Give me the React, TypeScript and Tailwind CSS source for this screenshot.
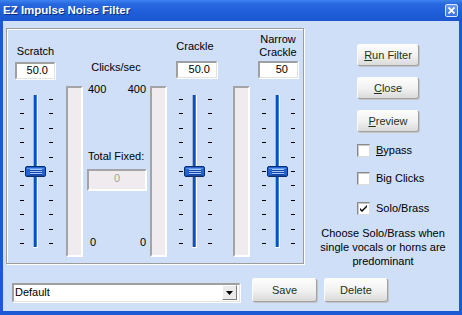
import React from "react";

const ticks = Array.from({ length: 11 }, (_, i) => Math.round(6 + i * 14.4));

function Slider() {
  return (
    <svg width="36" height="158" viewBox="0 0 36 158" className="block mx-auto">
      {ticks.map((y) => (
        <g key={y}>
          <rect x="2" y={y} width="4" height="1" fill="#000" />
          <rect x="31" y={y} width="4" height="1" fill="#000" />
        </g>
      ))}
      <rect x="15" y="2" width="1" height="152" fill="#9fb3d3" />
      <rect x="16" y="2" width="3" height="152" fill="#0b50bd" />
      <rect x="18" y="2" width="1" height="152" fill="#3c82e6" />
      <rect x="19" y="2" width="1" height="153" fill="#ffffff" />
      <rect x="15" y="154" width="5" height="1" fill="#ffffff" />
      <rect x="7.5" y="73.5" width="20" height="10" rx="1.5" fill="#2262d2" stroke="#0a2c73" />
      <rect x="9" y="75" width="17" height="1" fill="#5a96f0" />
      <rect x="9" y="82" width="17" height="1" fill="#174aa8" />
      {[76, 78, 80].map((y) => (
        <g key={y}>
          <rect x="12" y={y} width="12" height="1" fill="#a9c8ff" />
          <rect x="12" y={y + 1} width="12" height="1" fill="#1246a6" />
        </g>
      ))}
    </svg>
  );
}

function TextBox({ value, className }: { value: string; className: string }) {
  return (
    <div
      className={`h-[17px] bg-white border-t-2 border-l-2 border-r border-b border-t-[#a0a0a0] border-l-[#a0a0a0] border-r-[#e2e2e2] border-b-[#e2e2e2] shadow-[1px_1px_0_#ffffff] text-right pr-[6px] leading-[13px] ${className}`}
    >
      {value}
    </div>
  );
}

function Meter({ className }: { className?: string }) {
  return (
    <div
      className={`mt-[57px] w-[17px] h-[171px] bg-[#efebef] border-2 border-t-[#a4a4a8] border-l-[#a4a4a8] border-r-white border-b-white ${className ?? ""}`}
    />
  );
}

function Btn({ children, className }: { children: React.ReactNode; className: string }) {
  return (
    <button
      type="button"
      className={`flex items-center justify-center rounded-[3px] border border-t-[#fdfdfd] border-l-[#fdfdfd] border-r-[#a2a2a2] border-b-[#a2a2a2] bg-[linear-gradient(180deg,#fdfdfd_0%,#f0f0f0_55%,#dadada_100%)] shadow-[1px_1px_0_#c4c4c4] text-[#1e3312] leading-[13px] ${className}`}
    >
      {children}
    </button>
  );
}

function Check({ label, checked, className }: { label: React.ReactNode; checked?: boolean; className: string }) {
  return (
    <div className={`flex items-center ${className}`}>
      <div className="w-[13px] h-[13px] bg-white border border-t-[#8a8a8a] border-l-[#8a8a8a] border-r-[#dcdcdc] border-b-[#dcdcdc] shadow-[inset_1px_1px_0_#c8c8c8] flex items-center justify-center">
        {checked && (
          <svg width="7" height="7" viewBox="0 0 7 7">
            <path d="M0 3 L0 5 L2 7 L7 2 L7 0 L2 5 Z" fill="#000" />
          </svg>
        )}
      </div>
      <span className="ml-[6px] leading-[13px]">{label}</span>
    </div>
  );
}

export default function App() {
  return (
    <div className="w-[462px] h-[315px] flex flex-col overflow-hidden font-['Liberation_Sans',Arial,sans-serif] text-[11px] leading-[13px] text-black">
      <div className="h-[21px] shrink-0 flex items-center justify-between pl-[3px] pr-[4px] bg-[linear-gradient(180deg,#3d83f2_0%,#2767de_20%,#1f5ed8_60%,#1a56cf_100%)]">
        <span className="text-white font-bold text-[11.5px] leading-none [text-shadow:1px_1px_0_#0a2a80]">
          EZ Impulse Noise Filter
        </span>
        <div className="w-[13px] h-[13px] rounded-[2px] border border-[#dbe6fb] bg-[linear-gradient(180deg,#6d9cf3_0%,#3a70e0_100%)] flex items-center justify-center">
          <svg width="7" height="7" viewBox="0 0 7 7">
            <path d="M0.5 0.5 L6.5 6.5 M6.5 0.5 L0.5 6.5" stroke="#fff" strokeWidth="1.8" />
          </svg>
        </div>
      </div>

      <div className="flex-1 flex flex-col bg-[#cfdff7] border-x-[3px] border-b-[4px] border-t-0 border-[#1c59d4]">
        <div className="h-[244px] flex items-start">
          <div className="ml-[3px] mt-[7px] w-[298px] h-[236px] shrink-0 border border-[#9c9c9c] shadow-[1px_1px_0_#ffffff,inset_1px_1px_0_#ffffff] flex items-start">
            <div className="ml-[6px] w-[45px] flex flex-col">
              <div className="mt-[16px] text-center">Scratch</div>
              <TextBox value="50.0" className="mt-[4px] w-[40px] ml-[2px]" />
              <div className="mt-[14px]">
                <Slider />
              </div>
            </div>

            <Meter className="ml-[8px]" />

            <div className="ml-[2px] w-[62px] flex flex-col">
              <div className="mt-[32px] text-center">Clicks/sec</div>
              <div className="mt-[9px] flex justify-between pl-[3px] pr-[1px]">
                <span>400</span>
                <span>400</span>
              </div>
              <div className="mt-[54px] pl-[3px] whitespace-nowrap">Total Fixed:</div>
              <div className="mt-[6px] ml-[2px] w-[60px] h-[22px] pt-[1px] bg-[#efebef] border-2 border-t-[#a4a4a8] border-l-[#a4a4a8] border-r-white border-b-white text-center text-[#a3a3a3]">
                0
              </div>
              <div className="mt-[45px] flex justify-between pl-[5px] pr-[1px]">
                <span>0</span>
                <span>0</span>
              </div>
            </div>

            <Meter className="ml-[3px]" />

            <div className="ml-[7px] w-[42px] flex flex-col">
              <div className="mt-[11px] text-center">Crackle</div>
              <TextBox value="50.0" className="mt-[8px] w-[41px] ml-[2px]" />
              <div className="mt-[15px]">
                <Slider />
              </div>
            </div>

            <Meter className="ml-[17px]" />

            <div className="ml-[7px] w-[42px] flex flex-col">
              <div className="mt-[4px] text-center">
                Narrow
                <br />
                Crackle
              </div>
              <TextBox value="50" className="mt-[2px] w-[40px] ml-[1px] pr-[9px]" />
              <div className="mt-[15px]">
                <Slider />
              </div>
            </div>
          </div>

          <div className="w-[155px] shrink-0 flex flex-col">
            <Btn className="mt-[23px] ml-[53px] w-[62px] h-[22px]">
              <span>
                <span className="underline">R</span>un Filter
              </span>
            </Btn>
            <Btn className="mt-[11px] ml-[53px] w-[62px] h-[22px]">
              <span>
                <span className="underline">C</span>lose
              </span>
            </Btn>
            <Btn className="mt-[11px] ml-[53px] w-[62px] h-[22px]">
              <span>
                <span className="underline">P</span>review
              </span>
            </Btn>
            <Check
              className="mt-[12px] ml-[53px]"
              label={
                <>
                  <span className="underline">B</span>ypass
                </>
              }
            />
            <Check className="mt-[15px] ml-[53px]" label="Big Clicks" />
            <Check className="mt-[17px] ml-[53px]" label="Solo/Brass" checked />
            <div className="mt-[11px] pl-[3px] text-center leading-[14px] whitespace-nowrap">
              Choose Solo/Brass when
              <br />
              single vocals or horns are
              <br />
              predominant
            </div>
          </div>
        </div>

        <div className="mt-[13px] flex items-start">
          <div className="ml-[9px] mt-[5px] w-[228px] h-[19px] bg-white border-t-2 border-l-2 border-r border-b border-t-[#a0a0a0] border-l-[#a0a0a0] border-r-[#e2e2e2] border-b-[#e2e2e2] shadow-[1px_1px_0_#ffffff] flex items-start">
            <span className="pl-[1px] leading-[13px] pt-[1px]">Default</span>
            <div className="ml-auto mr-[2px] w-[15px] h-[15px] bg-[#ebebeb] border border-t-[#ffffff] border-l-[#ffffff] border-r-[#7c7c7c] border-b-[#7c7c7c] flex items-center justify-center">
              <svg width="7" height="4" viewBox="0 0 7 4">
                <path d="M0 0 H7 L3.5 4 Z" fill="#000" />
              </svg>
            </div>
          </div>
          <Btn className="ml-[12px] w-[65px] h-[24px]">Save</Btn>
          <Btn className="ml-[7px] w-[64px] h-[24px]">Delete</Btn>
        </div>
      </div>
    </div>
  );
}
